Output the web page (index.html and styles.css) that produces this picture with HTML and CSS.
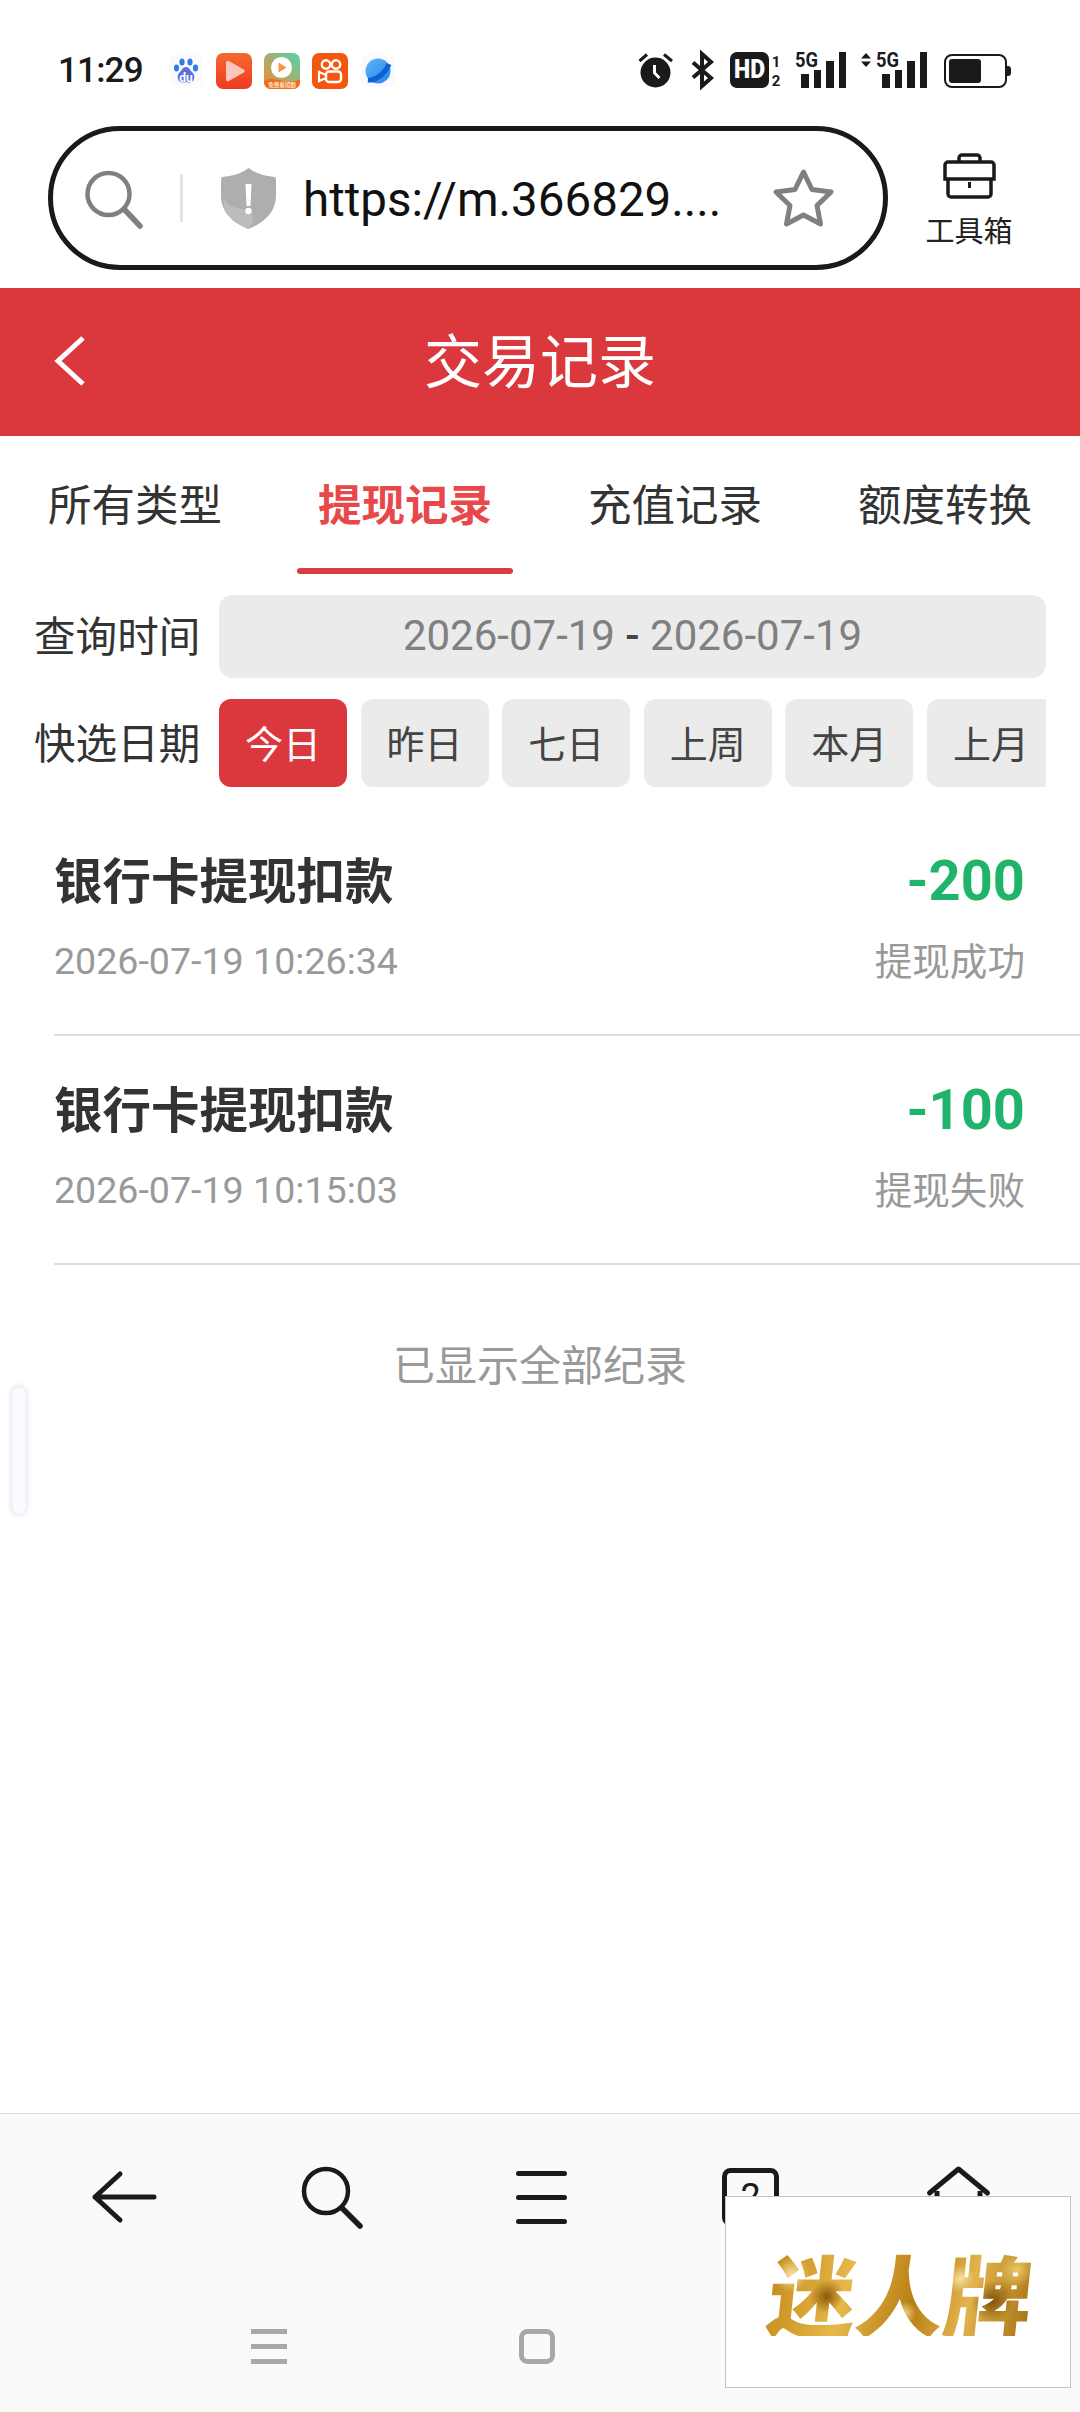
FILE: index.html
```html
<!DOCTYPE html>
<html lang="zh-CN">
<head>
<meta charset="utf-8">
<title>交易记录</title>
<link rel="stylesheet" href="styles.css">
</head>
<body>
<div class="phone">
  <div class="status">
    <div class="status-left">
      <span class="time">11:29</span>
      <div class="apps">
        <svg class="app" width="36" height="36" viewBox="0 0 36 36"><rect x="1" y="1" width="34" height="34" rx="8" fill="#fbfbfe"/><ellipse cx="8.500" cy="15" rx="2.600" ry="3.400" fill="#2f7de8"/><ellipse cx="14" cy="9" rx="2.600" ry="3.600" fill="#2f7de8"/><ellipse cx="22" cy="9" rx="2.600" ry="3.600" fill="#2f7de8"/><ellipse cx="27.500" cy="15" rx="2.600" ry="3.400" fill="#2f7de8"/><path d="M18 14c-3 0-4 3-6 5-2 2-3 4-2 7 1 4 5 4 8 3 3 1 7 1 8-3 1-3 0-5-2-7-2-2-3-5-6-5z" fill="#5d6fe0"/><text x="18" y="29" class="du">du</text></svg>
        <svg class="app" width="36" height="36" viewBox="0 0 36 36"><defs><linearGradient id="r1" x1="0" y1="0" x2="0" y2="1"><stop offset="0" stop-color="#f56a2c"/><stop offset="1" stop-color="#ee3a23"/></linearGradient></defs><rect width="36" height="36" rx="7" fill="url(#r1)"/><path d="M10 9.500c0-1.500 1.500-2.300 2.800-1.600l15 8.500c1.300.7 1.300 2.500 0 3.200l-15 8.500c-1.300.7-2.800-.1-2.800-1.600z" fill="#fcc6bc"/></svg>
        <svg class="app" width="36" height="36" viewBox="0 0 36 36"><defs><linearGradient id="r2" x1="0" y1="1" x2="1" y2="0"><stop offset="0" stop-color="#f78a2d"/><stop offset="1" stop-color="#55d3ae"/></linearGradient></defs><rect width="36" height="36" rx="7" fill="url(#r2)"/><circle cx="17.500" cy="14.500" r="10.500" fill="#fff"/><path d="M14.500 9.500l8 5-8 5z" fill="#f29a3a"/><path d="M0 28c6-3 12-2 18 0s12 1 18-2v3a7 7 0 0 1-7 7H7a7 7 0 0 1-7-7z" fill="#ef6c20"/><text x="18" y="33.500" class="tiny">免费看短剧</text></svg>
        <svg class="app" width="36" height="36" viewBox="0 0 36 36"><rect width="36" height="36" rx="7" fill="#f4560f"/><circle cx="14" cy="11.500" r="4.200" fill="none" stroke="#fff" stroke-width="2.400"/><circle cx="24" cy="11.500" r="4.200" fill="none" stroke="#fff" stroke-width="2.400"/><rect x="14" y="18.500" width="15" height="10.500" rx="3" fill="none" stroke="#fff" stroke-width="2.400"/><path d="M13 21.500l-6-2.500v9l6-2.500" fill="none" stroke="#fff" stroke-width="2.200"/></svg>
        <svg class="app" width="36" height="36" viewBox="0 0 36 36"><defs><linearGradient id="r3" x1="0" y1="0" x2="1" y2="1"><stop offset="0" stop-color="#62b4f6"/><stop offset="1" stop-color="#1f86ee"/></linearGradient></defs><rect x="1" y="2" width="34" height="32" rx="8" fill="#f9fafe"/><circle cx="18" cy="18" r="12.500" fill="url(#r3)"/><path d="M29 11C25 21 15 28 8 27" fill="none" stroke="#0f5fd6" stroke-width="5"/></svg>
      </div>
    </div>
    <div class="status-right">
      <svg width="38" height="36" viewBox="0 0 38 36"><circle cx="17.500" cy="20.500" r="15" fill="#1a1a1a"/><path d="M1.500 9L9 2.500M34 9L26 2.500" stroke="#1a1a1a" stroke-width="3"/><path d="M16.500 13v8l5 5" fill="none" stroke="#fff" stroke-width="3"/></svg>
      <svg width="24" height="36" viewBox="0 0 24 36"><path d="M2 10.500L20 26l-9 8V2l9 8L2 25.500" fill="none" stroke="#1a1a1a" stroke-width="4"/></svg>
      <svg width="50" height="36" viewBox="0 0 50 36"><rect width="39" height="36" rx="7" fill="#1a1a1a"/><text x="19.500" y="26" class="hd" textLength="31" lengthAdjust="spacingAndGlyphs">HD</text><text x="46" y="15" class="sim">1</text><text x="46" y="34" class="sim">2</text></svg>
      <svg width="51" height="36" viewBox="0 0 51 36"><text x="0" y="15" class="five" textLength="23" lengthAdjust="spacingAndGlyphs">5G</text><path d="M6 22h8v14H6zM19 18h7v18h-7zM31 9h8v27h-8zM44 0h7v36h-7z" fill="#1a1a1a"/></svg>
      <svg width="68" height="36" viewBox="0 0 68 36"><path d="M5 1l5 5.500H0zM5 15l5-5.500H0z" fill="#1a1a1a"/><text x="15" y="15" class="five" textLength="23" lengthAdjust="spacingAndGlyphs">5G</text><path d="M21 22h8v14h-8zM34 18h7v18h-7zM46 9h8v27h-8zM59 0h7v36h-7z" fill="#1a1a1a"/></svg>
      <svg width="67" height="36" viewBox="0 0 67 36"><rect x="1" y="3" width="61" height="32" rx="7" fill="none" stroke="#1a1a1a" stroke-width="2"/><rect x="5" y="7" width="32" height="24" rx="3" fill="#1a1a1a"/><path d="M63 14h1a3 3 0 0 1 3 3v4a3 3 0 0 1-3 3h-1z" fill="#1a1a1a"/></svg>
    </div>
  </div>

  <div class="browser">
    <div class="addr">
      <svg class="addr-search" width="58" height="58" viewBox="0 0 58 58"><circle cx="23.500" cy="23" r="21" fill="none" stroke="#808080" stroke-width="4.500"/><path d="M39 38l16 17" stroke="#808080" stroke-width="5.500" stroke-linecap="round"/></svg>
      <span class="addr-sep"></span>
      <svg class="shield" width="55" height="61" viewBox="0 0 55 61"><path d="M27.500 0C35 6 44 8 54 9c1 1 1 3 1 5v14c0 16-12 27-27.500 33C12 55 0 44 0 28V14c0-2 0-4 1-5 10-1 19-3 26.500-9z" fill="#aeaeae"/><path d="M27.500 61C12 55 0 44 3 30c6 14 22 8 28 16 3 5 0 11-3.500 15z" fill="#bcbcbc"/><path d="M24.500 16h6l-1 22h-4z" fill="#fff"/><circle cx="27.500" cy="43" r="3.200" fill="#fff"/></svg>
      <span class="url">https://m.366829....</span>
      <svg class="star" width="61" height="58" viewBox="0 0 61 58"><path d="M30.500 3l8.500 17.500 19 2.500-14 13.500 3.500 18.500-17-9-17 9 3.500-18.500L3 23l19-2.500z" fill="none" stroke="#808080" stroke-width="5" stroke-linejoin="round"/></svg>
    </div>
    <div class="tools">
      <svg width="53" height="46" viewBox="0 0 53 46"><path d="M16 9V5a3 3 0 0 1 3-3h15a3 3 0 0 1 3 3v4" fill="none" stroke="#1a1a1a" stroke-width="3.500"/><path d="M5 9h43a3 3 0 0 1 3 3v14H2V12a3 3 0 0 1 3-3z" fill="none" stroke="#1a1a1a" stroke-width="3.500"/><path d="M5 26v15a3 3 0 0 0 3 3h37a3 3 0 0 0 3-3V26" fill="none" stroke="#1a1a1a" stroke-width="3.500"/><path d="M26.500 29v6" stroke="#1a1a1a" stroke-width="3"/></svg>
      <span class="tools-label">工具箱</span>
    </div>
  </div>

  <header class="header">
    <svg class="header-back" width="34" height="52" viewBox="0 0 34 52"><path d="M30 3L5 26l25 23" fill="none" stroke="#fff" stroke-width="5"/></svg>
    <h1 class="header-title">交易记录</h1>
  </header>

  <nav class="tabs">
    <div class="tab">所有类型</div>
    <div class="tab tab-active">提现记录</div>
    <div class="tab">充值记录</div>
    <div class="tab">额度转换</div>
  </nav>

  <section class="filters">
    <div class="filter-label">查询时间</div>
    <div class="date-box">2026-07-19 <span class="date-sep">-</span> 2026-07-19</div>
    <div class="filter-label">快选日期</div>
    <div class="chips">
      <span class="chip chip-active">今日</span>
      <span class="chip">昨日</span>
      <span class="chip">七日</span>
      <span class="chip">上周</span>
      <span class="chip">本月</span>
      <span class="chip">上月</span>
    </div>
  </section>

  <section class="list">
    <div class="row">
      <div class="row-title">银行卡提现扣款</div>
      <div class="row-amount">-200</div>
      <div class="row-date">2026-07-19 10:26:34</div>
      <div class="row-status">提现成功</div>
    </div>
    <div class="row">
      <div class="row-title">银行卡提现扣款</div>
      <div class="row-amount">-100</div>
      <div class="row-date">2026-07-19 10:15:03</div>
      <div class="row-status">提现失败</div>
    </div>
  </section>
  <div class="list-end">已显示全部纪录</div>
  <div class="side-pill"></div>

  <div class="bottom">
    <div class="toolbar">
      <svg width="64" height="50" viewBox="0 0 64 50"><path d="M3 25h59M28 2L3 25l25 23" fill="none" stroke="#1a1a1a" stroke-width="5" stroke-linecap="round" stroke-linejoin="round"/></svg>
      <svg width="61" height="61" viewBox="0 0 61 61"><circle cx="24" cy="24" r="22" fill="none" stroke="#1a1a1a" stroke-width="4.500"/><path d="M40 41l18 18" stroke="#1a1a1a" stroke-width="5.500" stroke-linecap="round"/></svg>
      <svg width="51" height="53" viewBox="0 0 51 53"><path d="M2.500 2.500h46M2.500 26.500h46M2.500 50.500h46" stroke="#1a1a1a" stroke-width="5" stroke-linecap="round"/></svg>
      <svg width="57" height="58" viewBox="0 0 57 58"><rect x="2.500" y="2.500" width="52" height="53" rx="6" fill="none" stroke="#1a1a1a" stroke-width="5"/><text x="28.500" y="41" class="count">2</text></svg>
      <svg width="63" height="62" viewBox="0 0 63 62"><path d="M2.500 27L31.500 3l29 24" fill="none" stroke="#1a1a1a" stroke-width="5" stroke-linecap="round" stroke-linejoin="round"/><path d="M10 25v31a3 3 0 0 0 3 3h37a3 3 0 0 0 3-3V25" fill="none" stroke="#1a1a1a" stroke-width="5"/></svg>
    </div>
    <div class="sysnav">
      <svg width="36" height="35" viewBox="0 0 36 35"><path d="M0 0h36v5H0zM0 15h36v5H0zM0 30h36v5H0z" fill="#a8a8a8"/></svg>
      <svg width="36" height="35" viewBox="0 0 36 35"><rect x="2.500" y="2.500" width="31" height="30" rx="6" fill="none" stroke="#a8a8a8" stroke-width="5"/></svg>
      <svg width="36" height="35" viewBox="0 0 36 35"><path d="M30 3L5 17.500 30 32z" fill="none" stroke="#a8a8a8" stroke-width="5"/></svg>
    </div>
    <div class="promo"><span class="promo-text">迷人牌</span></div>
  </div>
</div>
</body>
</html>
```
FILE: styles.css
```css
* { box-sizing: border-box; }
html, body { margin: 0; padding: 0; background: #fff; }
.phone {
  position: relative;
  width: 1080px;
  height: 2412px;
  overflow: hidden;
  display: flex;
  flex-direction: column;
  background: #fff;
  font-family: "Noto Sans CJK SC", "Noto Sans", sans-serif;
  color: #333;
}
svg { display: block; flex: none; overflow: visible; }

/* status bar */
.status {
  height: 106px;
  padding: 52px 69px 0 58px;
  display: flex;
  justify-content: space-between;
  align-items: flex-start;
}
.status-left { display: flex; align-items: center; }
.time {
  font: 500 35px/36px Roboto, sans-serif;
  letter-spacing: -.8px;
  color: #1a1a1a;
  width: 110px;
}
.apps { display: flex; gap: 12px; margin-top: 1px; }
.status-right { display: flex; gap: 15px; }
.du { font: 700 12px Roboto, sans-serif; fill: #fff; text-anchor: middle; }
.tiny { font: 700 5.500px "Noto Sans CJK SC", sans-serif; fill: #ffe9c9; text-anchor: middle; }
.hd { font: 900 25px Roboto, sans-serif; fill: #fff; text-anchor: middle; }
.sim { font: 700 15px Roboto, sans-serif; fill: #1a1a1a; text-anchor: middle; }
.five { font: 700 20px Roboto, sans-serif; fill: #1a1a1a; }

/* browser bar */
.browser {
  height: 182px;
  padding: 20px 0 18px 48px;
  display: flex;
}
.addr {
  width: 840px;
  height: 144px;
  border: 5px solid #1a1a1a;
  border-radius: 72px;
  display: flex;
  align-items: center;
  padding-left: 32px;
}
.addr-search { margin-top: 4px; }
.addr-sep {
  width: 3px;
  height: 48px;
  background: #e3e3e3;
  margin: 0 0 0 37px;
}
.shield { margin-left: 38px; }
.url {
  margin-left: 27px;
  width: 419px;
  padding-top: 4px;
  font: 400 47.500px/60px Roboto, sans-serif;
  color: #111;
  white-space: nowrap;
}
.star { margin-left: 51px; }
.tools {
  margin: 27px 0 0 38px;
  width: 86px;
  display: flex;
  flex-direction: column;
  align-items: center;
  gap: 12px;
}
.tools-label { font-size: 29px; line-height: 36px; color: #222; white-space: nowrap; }

/* red header */
.header {
  height: 148px;
  background: #db383e;
  display: grid;
  grid-template-columns: 1fr auto 1fr;
  align-items: center;
}
.header-back { margin-left: 53px; margin-bottom: 2px; }
.header-title {
  grid-column: 2;
  margin: 0;
  padding-bottom: 9px;
  font-size: 58px;
  font-weight: 400;
  color: #fff;
  line-height: 1;
}

/* tabs */
.tabs { display: grid; grid-template-columns: repeat(4, 270px); }
.tab {
  height: 138px;
  padding-top: 4px;
  line-height: 126px;
  text-align: center;
  font-size: 43.500px;
  color: #333;
  position: relative;
}
.tab-active { color: #e8484a; font-weight: 700; }
.tab-active::after {
  content: "";
  position: absolute;
  left: 27px;
  bottom: 0;
  width: 216px;
  height: 6px;
  border-radius: 3px;
  background: #d73f45;
}

/* filters */
.filters {
  margin-top: 21px;
  padding: 0 34px;
  display: grid;
  grid-template-columns: 185px 1fr;
  grid-template-rows: 83px 88px;
  row-gap: 21px;
  align-items: center;
}
.filter-label { font-size: 41.600px; color: #333; white-space: nowrap; line-height: 1; padding-bottom: 3px; }
.date-box {
  height: 83px;
  border-radius: 14px;
  background: #ebebeb;
  color: #808080;
  font: 400 42px/81px Roboto, sans-serif;
  text-align: center;
}
.date-sep { color: #444; font-weight: 500; }
.chips { display: flex; gap: 13.600px; overflow: hidden; height: 88px; }
.chip {
  flex: none;
  width: 128px;
  height: 88px;
  border-radius: 12px;
  background: #ebebeb;
  color: #444;
  font-size: 38px;
  line-height: 85px;
  text-align: center;
}
.chip-active { background: #db383e; color: #fff; }

/* list */
.list { margin-top: 20px; }
.row {
  margin-left: 54px;
  padding: 40px 55px 38px 0;
  border-bottom: 2px solid #dcdcdc;
  display: grid;
  grid-template-columns: 1fr auto;
  grid-template-rows: 68px 68px;
  row-gap: 13px;
  align-items: center;
}
.row-title { font-size: 48.500px; font-weight: 700; color: #333; line-height: 1; padding-bottom: 5px; }
.row-amount { font: 700 56px/1 Roboto, sans-serif; color: #1fb36b; justify-self: end; }
.row-date { font: 400 37.600px/1 Roboto, sans-serif; color: #999; }
.row-status { font-size: 37.600px; color: #999; line-height: 1; padding-bottom: 6px; justify-self: end; }
.list-end {
  margin-top: 68px;
  line-height: 60px;
  font-size: 42px;
  text-align: center;
  color: #999;
}
.side-pill {
  position: absolute;
  left: 10px;
  top: 1385px;
  width: 18px;
  height: 131px;
  border-radius: 9px;
  background: #fcfcff;
  border: 3px solid #f1f3fb;
  box-shadow: 0 0 5px #e9ecf7;
}

/* bottom */
.bottom {
  position: absolute;
  left: 0;
  right: 0;
  bottom: 0;
  height: 299px;
  background: #fafafa;
  border-top: 1px solid #dcdcdc;
}
.toolbar {
  height: 166px;
  padding: 0 17px 0 20px;
  display: grid;
  grid-template-columns: repeat(5, 1fr);
  align-items: center;
  justify-items: center;
}
.count { font: 400 36px Roboto, sans-serif; fill: #1a1a1a; text-anchor: middle; }
.sysnav {
  height: 132px;
  padding: 0 135px;
  display: grid;
  grid-template-columns: repeat(3, 268px);
  align-items: center;
  justify-items: center;
}
.promo {
  position: absolute;
  left: 725px;
  top: 82px;
  width: 346px;
  height: 192px;
  background: #fff;
  border: 1px solid #c4c4c4;
  display: flex;
  align-items: center;
  justify-content: center;
}
.promo-text {
  margin-left: 6px;
  font-size: 88px;
  font-weight: 900;
  line-height: 1;
  white-space: nowrap;
  color: transparent;
  transform: skewX(-6deg);
  background:
    radial-gradient(circle at 8% 30%, #f7e2a0 0, transparent 7%),
    radial-gradient(circle at 22% 55%, #8a5a0c 0, transparent 8%),
    radial-gradient(circle at 40% 40%, #f9e6ad 0, transparent 8%),
    radial-gradient(circle at 52% 75%, #f3dc9a 0, transparent 8%),
    radial-gradient(circle at 63% 60%, #8a5a0c 0, transparent 7%),
    radial-gradient(circle at 72% 35%, #f7e2a0 0, transparent 7%),
    radial-gradient(circle at 85% 60%, #80520a 0, transparent 9%),
    radial-gradient(circle at 93% 25%, #eec765 0, transparent 7%),
    linear-gradient(100deg, #c48a1a, #e6b84a 30%, #b87e14 55%, #e2b44c 75%, #a67214);
  -webkit-background-clip: text;
  background-clip: text;
}
```
